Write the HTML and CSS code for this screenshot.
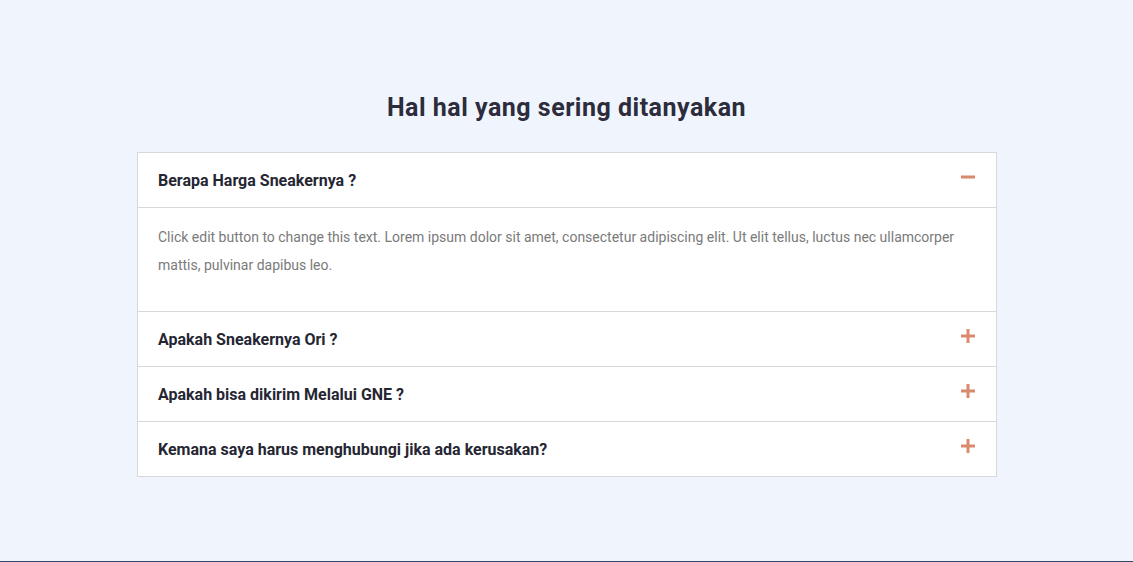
FILE: index.html
```html
<!DOCTYPE html>
<html lang="id">
<head>
<meta charset="utf-8">
<title>FAQ</title>
<link rel="stylesheet" href="styles.css">
</head>
<body>
<section class="faq">
  <h2 class="faq-title">Hal hal yang sering ditanyakan</h2>
  <div class="accordion">
    <div class="item open">
      <div class="item-head">
        <span class="item-q">Berapa Harga Sneakernya ?</span>
        <svg class="icon" width="14" height="14" viewBox="0 0 14 14"><rect x="0" y="5.5" width="14" height="3" fill="#d98a6c"/></svg>
      </div>
      <div class="item-body">
        <p>Click edit button to change this text. Lorem ipsum dolor sit amet, consectetur adipiscing elit. Ut elit tellus, luctus nec ullamcorper mattis, pulvinar dapibus leo.</p>
      </div>
    </div>
    <div class="item">
      <div class="item-head">
        <span class="item-q">Apakah Sneakernya Ori ?</span>
        <svg class="icon" width="14" height="14" viewBox="0 0 14 14"><rect x="0" y="5.5" width="14" height="3" fill="#d98a6c"/><rect x="5.5" y="0" width="3" height="14" fill="#d98a6c"/></svg>
      </div>
    </div>
    <div class="item">
      <div class="item-head">
        <span class="item-q">Apakah bisa dikirim Melalui GNE ?</span>
        <svg class="icon" width="14" height="14" viewBox="0 0 14 14"><rect x="0" y="5.5" width="14" height="3" fill="#d98a6c"/><rect x="5.5" y="0" width="3" height="14" fill="#d98a6c"/></svg>
      </div>
    </div>
    <div class="item">
      <div class="item-head">
        <span class="item-q">Kemana saya harus menghubungi jika ada kerusakan?</span>
        <svg class="icon" width="14" height="14" viewBox="0 0 14 14"><rect x="0" y="5.5" width="14" height="3" fill="#d98a6c"/><rect x="5.5" y="0" width="3" height="14" fill="#d98a6c"/></svg>
      </div>
    </div>
  </div>
</section>
<div class="next"></div>
</body>
</html>
```
FILE: styles.css
```css
html, body {
  margin: 0;
  padding: 0;
  height: 100%;
}
body {
  background: #f0f5fd;
  font-family: Roboto, "Liberation Sans", Arial, sans-serif;
  display: flex;
  flex-direction: column;
}
.faq {
  flex: 1;
  padding-top: 92px;
  display: flex;
  flex-direction: column;
  align-items: center;
}
.faq-title {
  margin: 0 0 28px;
  font-size: 25px;
  line-height: 32px;
  font-weight: 700;
  color: #2c2c3c;
  letter-spacing: 0.5px;
}
.accordion {
  box-sizing: border-box;
  width: 860px;
  margin-left: 1px;
  background: #fff;
  border: 1px solid #d5d8dc;
}
.item + .item {
  border-top: 1px solid #d5d8dc;
}
.item-head {
  display: flex;
  justify-content: space-between;
  align-items: center;
  padding: 16px 21px 14px 20px;
  height: 24px;
}
.item-q {
  font-size: 16px;
  line-height: 24px;
  font-weight: 700;
  color: #262633;
}
.icon {
  display: block;
  margin-top: -8px;
}
.item-body {
  border-top: 1px solid #d5d8dc;
  padding: 15px 20px 32px;
}
.item-body p {
  margin: 0;
  font-size: 14px;
  line-height: 28px;
  color: #7a7a7a;
}
.next {
  height: 1px;
  background: #34466a;
}
```
